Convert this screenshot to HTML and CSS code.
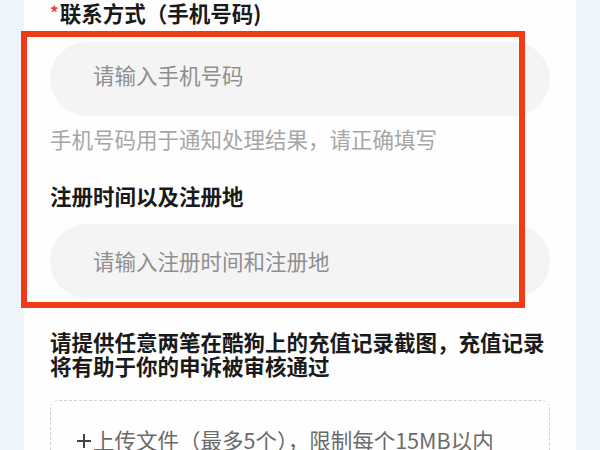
FILE: index.html
```html
<!DOCTYPE html>
<html lang="zh-CN">
<head>
<meta charset="utf-8">
<link rel="stylesheet" href="styles.css">
</head>
<body>
<div class="page">
  <div class="card">
    <div class="label"><span class="req">*</span>联系方式（手机号码)</div>
    <div class="input">请输入手机号码</div>
    <div class="hint">手机号码用于通知处理结果，请正确填写</div>
    <div class="label label-2">注册时间以及注册地</div>
    <div class="input input-2">请输入注册时间和注册地</div>
    <div class="para">请提供任意两笔在酷狗上的充值记录截图，充值记录将有助于你的申诉被审核通过</div>
    <div class="upload">
      <svg class="plus" width="16" height="16" viewBox="0 0 16 16"><path d="M8 1v14M1 8h14" stroke="#444" stroke-width="2" fill="none"/></svg>
      <span>上传文件（最多5个），限制每个15MB以内</span>
    </div>
  </div>
  <div class="highlight"></div>
</div>
</body>
</html>
```
FILE: styles.css
```css
html, body {
  margin: 0;
  padding: 0;
  background: #eef4fb;
  font-family: "Noto Sans CJK SC", "Noto Sans", sans-serif;
}
.page {
  position: relative;
  width: 600px;
  height: 450px;
  overflow: hidden;
}
.card {
  margin-left: 24px;
  margin-top: -2px;
  width: 552px;
  min-height: 452px;
  background: #fefefe;
  padding-left: 26px;
  box-sizing: border-box;
  display: flex;
  flex-direction: column;
}
.card > * {
  flex-shrink: 0;
}
.label {
  font-size: 21.5px;
  line-height: 28px;
  font-weight: 700;
  color: #1a1a1a;
  white-space: nowrap;
}
.req {
  color: #e8452c;
  font-size: 17px;
  vertical-align: 3px;
  margin-right: 1px;
}
.input {
  margin-top: 15px;
  width: 500px;
  height: 74px;
  border-radius: 37px;
  background: #f4f4f5;
  box-sizing: border-box;
  padding-left: 43px;
  padding-bottom: 8px;
  display: flex;
  align-items: center;
  font-size: 21.5px;
  line-height: 28px;
  color: #8f8f8f;
}
.hint {
  margin-top: 9px;
  font-size: 21.5px;
  line-height: 28px;
  color: #a6a6a6;
  white-space: nowrap;
}
.label-2 {
  margin-top: 29px;
}
.input-2 {
  margin-top: 14px;
  padding-bottom: 0;
}
.para {
  margin-top: 32px;
  width: 500px;
  font-size: 21.5px;
  line-height: 24px;
  font-weight: 700;
  color: #1a1a1a;
}
.upload {
  margin-top: 22px;
  width: 500px;
  height: 90px;
  box-sizing: border-box;
  border: 1.5px dashed #cfcfcf;
  border-radius: 9px;
  padding: 25px 0 0 25px;
  display: flex;
  align-items: flex-start;
  font-size: 21.5px;
  line-height: 28px;
  color: #6a6a6a;
  white-space: nowrap;
}
.plus {
  margin-top: 7px;
  margin-right: 1px;
  flex: none;
}
.highlight {
  position: absolute;
  left: 21px;
  top: 31px;
  width: 504px;
  height: 277px;
  box-sizing: border-box;
  border: 6px solid #f03b17;
}
```
